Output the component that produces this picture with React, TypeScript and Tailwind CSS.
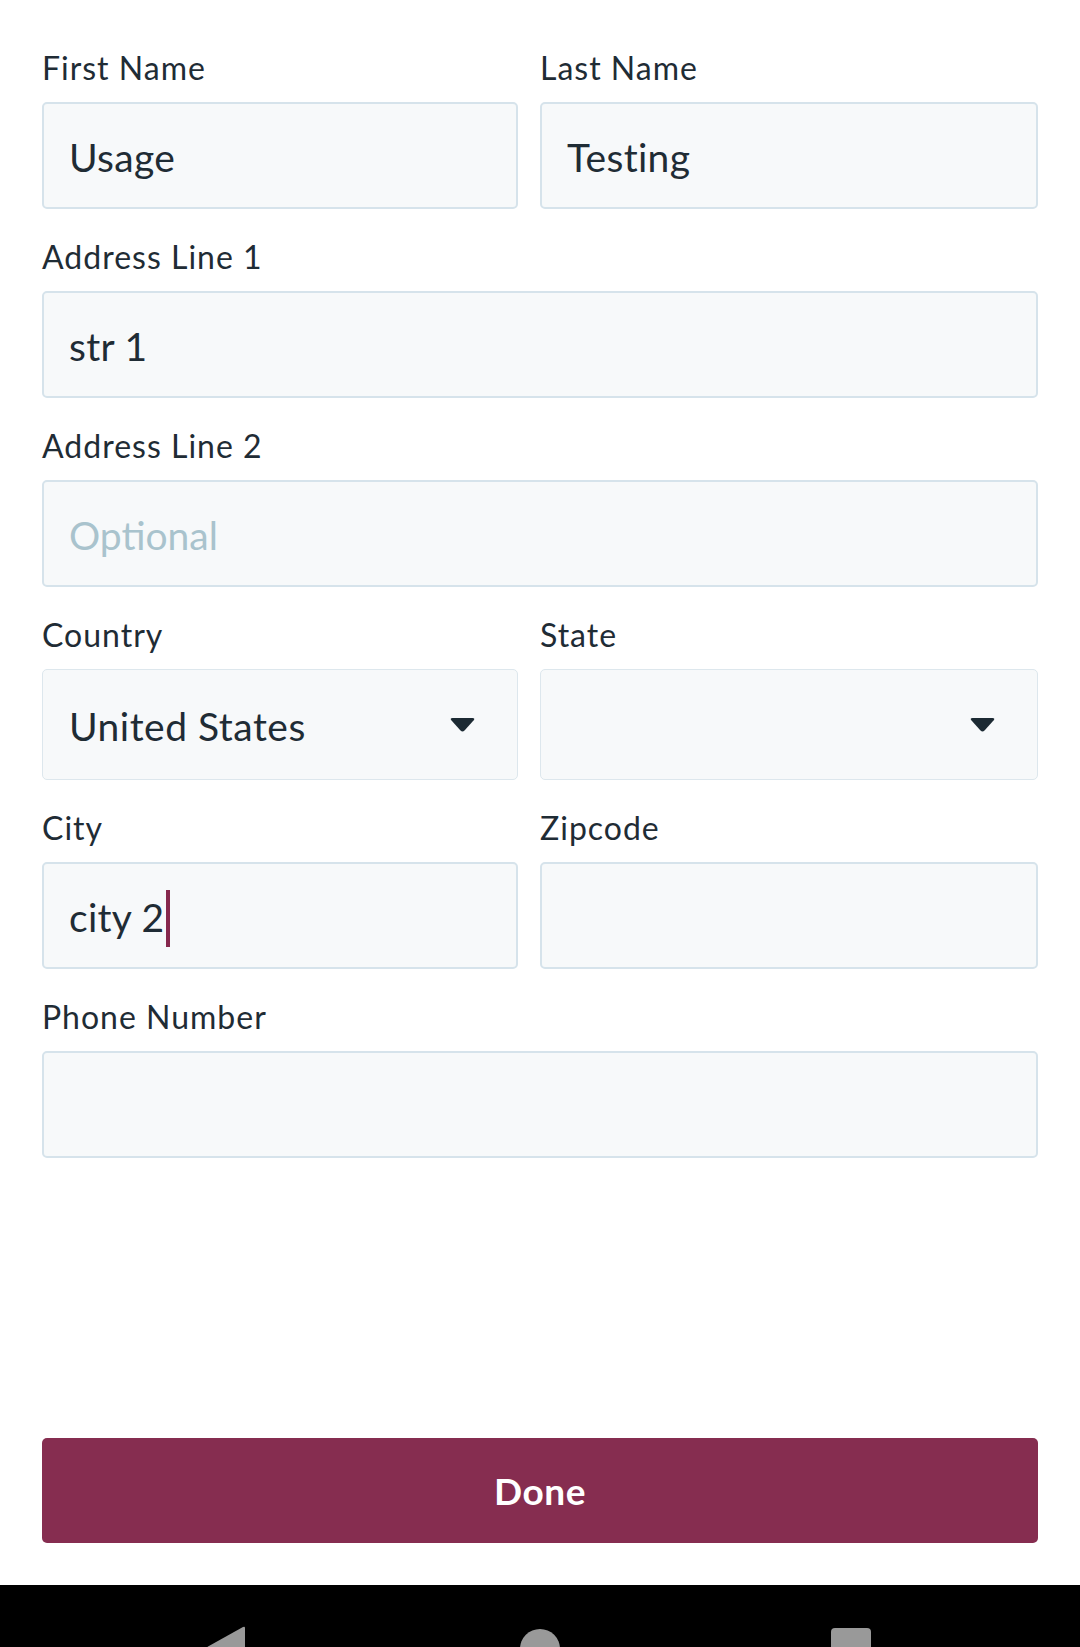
import { ReactNode } from "react";

const font = { fontFamily: "Lato, 'Open Sans', sans-serif" };

function Label({ children }: { children: ReactNode }) {
  return (
    <div className="h-[42px] pt-[2px] mb-[14px] text-[32px] leading-10 tracking-[1px] text-[#1f2c35]">{children}</div>
  );
}

function TextBox({ value, placeholder, caret }: { value?: string; placeholder?: string; caret?: boolean }) {
  return (
    <div className="h-[107px] flex items-center pl-[25px] pt-[4px] rounded-[5px] border-2 border-[#d6e3eb] bg-[#f7f9fa] text-[39px] tracking-[0.3px]">
      {value ? (
        <span className="text-[#1f2c35]">{value}</span>
      ) : (
        <span className="text-[#a9c3cd] tracking-normal">{placeholder}</span>
      )}
      {caret && <span className="ml-[1px] w-[4px] h-[57px] mt-[2px] bg-[#86284d]" />}
    </div>
  );
}

function SelectBox({ value }: { value?: string }) {
  return (
    <div className="h-[111px] flex items-center justify-between pl-[26px] pr-[41px] pt-[4px] rounded-[5px] border border-[#dde7ed] bg-[#f7f9fa] text-[39px] tracking-[0.5px] text-[#1f2c35]">
      <span>{value ?? ""}</span>
      <svg width="27" height="16" viewBox="0 0 26 16" className="-mt-[4px]">
        <path d="M3 1 H23 Q26 1 24 3.5 L15 13.5 Q13 15.5 11 13.5 L2 3.5 Q0 1 3 1 Z" fill="#1c2a33" />
      </svg>
    </div>
  );
}

function Field({ label, children }: { label: string; children: ReactNode }) {
  return (
    <div>
      <Label>{label}</Label>
      {children}
    </div>
  );
}

export default function App() {
  return (
    <div className="h-[1647px] overflow-hidden bg-white" style={font}>
      <div className="px-[42px] pt-[46px] flex flex-col gap-[26px]">
        <div className="grid grid-cols-2">
          <div className="pr-[22px]">
            <Field label="First Name">
              <TextBox value="Usage" />
            </Field>
          </div>
          <Field label="Last Name">
            <TextBox value="Testing" />
          </Field>
        </div>

        <Field label="Address Line 1">
          <TextBox value="str 1" />
        </Field>

        <Field label="Address Line 2">
          <TextBox placeholder="Optional" />
        </Field>

        <div className="grid grid-cols-2">
          <div className="pr-[22px]">
            <Field label="Country">
              <SelectBox value="United States" />
            </Field>
          </div>
          <Field label="State">
            <SelectBox />
          </Field>
        </div>

        <div className="grid grid-cols-2">
          <div className="pr-[22px]">
            <Field label="City">
              <TextBox value="city 2" caret />
            </Field>
          </div>
          <Field label="Zipcode">
            <TextBox />
          </Field>
        </div>

        <Field label="Phone Number">
          <TextBox />
        </Field>
      </div>

      <div className="px-[42px] mt-[280px] mb-[42px]">
        <button className="w-full h-[105px] rounded-[5px] bg-[#862d50] text-white text-[37px] tracking-[0.5px] font-bold">
          Done
        </button>
      </div>

      {/* android nav bar */}
      <div className="h-[126px] bg-black flex items-start pt-[41px]">
        <div className="flex w-full">
          <div className="ml-[207px]">
            <svg width="38" height="44" viewBox="0 0 38 44">
              <path d="M38 2 Q38 0 36 1 L1 20.5 Q-1 22 1 23.5 L36 43 Q38 44 38 42 Z" fill="#999999" />
            </svg>
          </div>
          <div className="ml-[275px] mt-[3px] w-[40px] h-[40px] rounded-full bg-[#999999]" />
          <div className="ml-[271px] mt-[2px] w-[40px] h-[40px] rounded-[4px] bg-[#999999]" />
        </div>
      </div>
    </div>
  );
}
